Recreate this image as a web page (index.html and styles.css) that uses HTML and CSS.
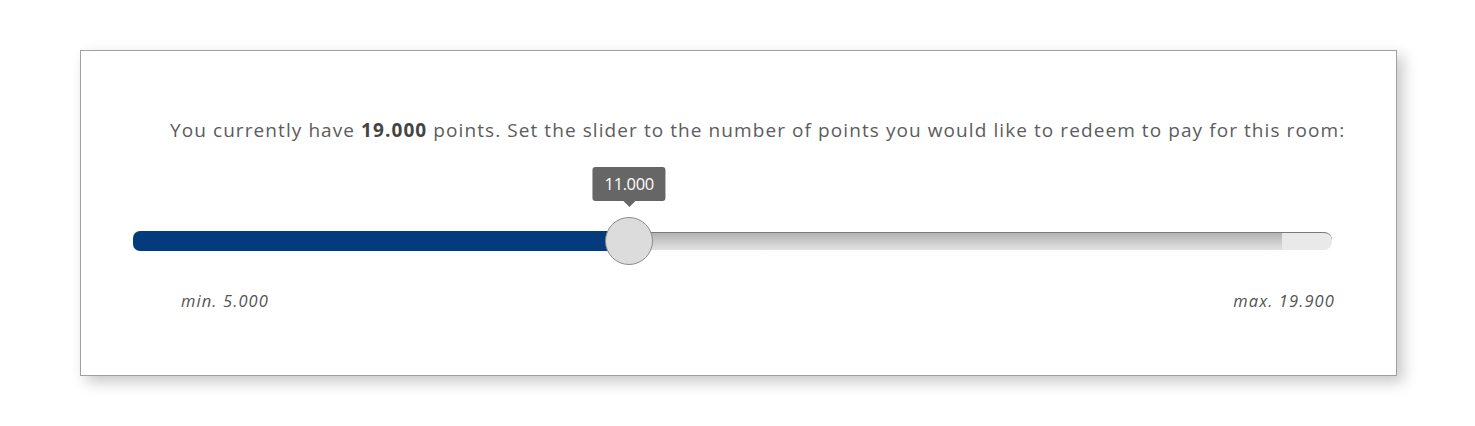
FILE: index.html
```html
<!DOCTYPE html>
<html lang="en">
<head>
    <meta charset="UTF-8">
    <title>Redeem Points</title>
    <link rel="stylesheet" href="styles.css">
</head>
<body>
    <!-- Points redemption panel -->
    <div class="card">
        <p class="intro">You currently have <b>19.000</b> points. Set the slider to the number of points you would like to redeem to pay for this room:</p>

        <div class="slider">
            <div class="track">
                <div class="fill" style="width: 41.3%"></div>
                <div class="rest"></div>
                <div class="thumb" style="left: 41.3%">
                    <span class="bubble">11.000</span>
                </div>
            </div>
            <div class="limits">
                <span>min. 5.000</span>
                <span>max. 19.900</span>
            </div>
        </div>
    </div>
</body>
</html>
```

FILE: styles.css
```css
body {
    margin: 0;
    padding-bottom: 40px;
    background: #fff;
    font-family: "Open Sans", Arial, sans-serif;
    color: #555;
}
.card {
    box-sizing: border-box;
    width: 1317px;
    height: 326px;
    margin: 50px 0 0 80px;
    border: 1px solid #a0a0a0;
    background: #fff;
    box-shadow: 6px 6px 14px rgba(0, 0, 0, 0.22);
    padding-top: 66px;
}
.intro {
    margin: 0 0 0 89px;
    font-size: 19px;
    line-height: 26px;
    color: #5c5c5c;
    letter-spacing: 1.08px;
    white-space: nowrap;
}
.intro b {
    color: #444;
}
.slider {
    margin: 88px 64px 0 52px;
}
.track {
    position: relative;
    height: 20px;
    display: flex;
}
.fill {
    height: 20px;
    background: #033b7c;
    border-radius: 7px 0 0 7px;
}
.rest {
    flex: 1;
    box-sizing: border-box;
    margin-top: 1px;
    height: 18px;
    border-top: 1px solid #7a7a7a;
    border-radius: 0 8px 8px 0;
    background:
        linear-gradient(#b2b2b2, #e2e2e2) 0 0 / calc(100% - 50px) 100% no-repeat,
        #e9e9e9;
}
.thumb {
    position: absolute;
    top: -14px;
    width: 46px;
    height: 46px;
    margin-left: -23px;
    border-radius: 50%;
    border: 1px solid #8c8c8c;
    background: #dcdcdc;
}
.bubble {
    position: absolute;
    bottom: 63px;
    left: 50%;
    transform: translateX(-50%);
    padding: 6px 12px;
    background: #666;
    color: #fff;
    font-size: 16.5px;
    line-height: 22px;
    border-radius: 3px;
    letter-spacing: -0.4px;
}
.bubble::after {
    content: "";
    position: absolute;
    left: 50%;
    bottom: -6px;
    margin-left: -6px;
    border-left: 6px solid transparent;
    border-right: 6px solid transparent;
    border-top: 6px solid #666;
}
.limits {
    display: flex;
    justify-content: space-between;
    margin-top: 38px;
    padding: 0 0 0 48px;
    font-size: 16.5px;
    font-style: italic;
    letter-spacing: 1.1px;
    color: #555;
}
.limits span:last-child {
    margin-right: -3px;
}
```
